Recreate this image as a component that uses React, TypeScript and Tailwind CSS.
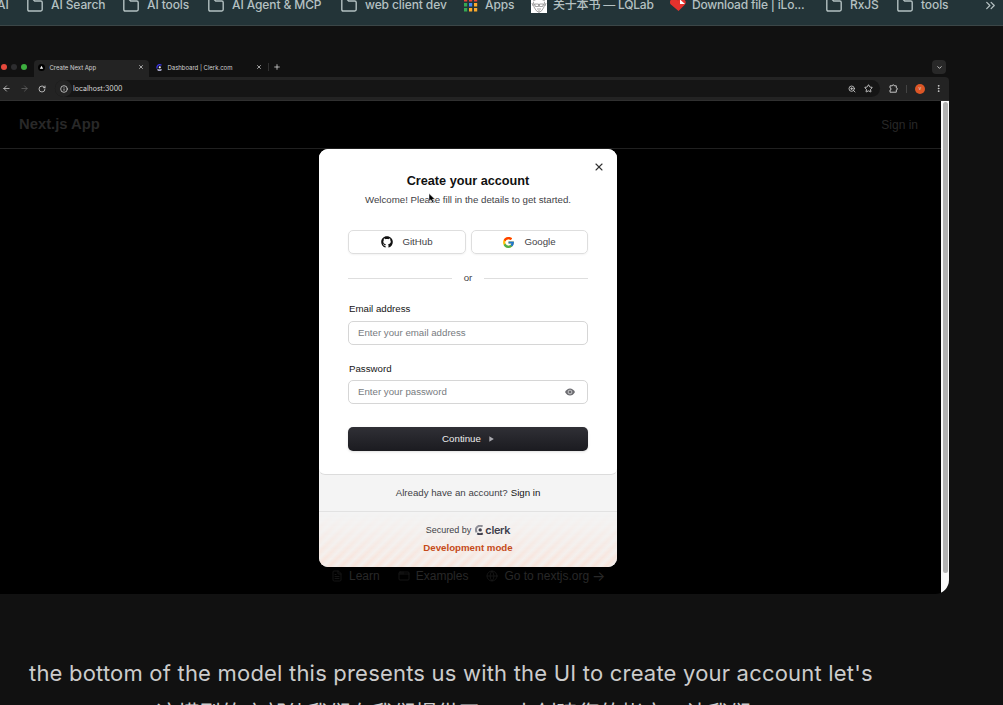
import type { ReactNode } from "react";
import {
  ArrowLeft,
  ArrowRight,
  ChevronDown,
  ChevronsRight,
  EllipsisVertical,
  FileText,
  AppWindow,
  Globe,
  Info,
  Plus,
  RotateCw,
  Star,
  X,
  ZoomIn,
} from "lucide-react";
import { FaGithub } from "react-icons/fa";
import { FcGoogle } from "react-icons/fc";

function Folder() {
  return (
    <svg width="16" height="14" viewBox="0 0 16 14" fill="none" stroke="#b3c0c1" strokeWidth="1.4" className="shrink-0">
      <path d="M.8 2.4Q.8 1 2.2 1h3.5l2 2h6.1q1.4 0 1.4 1.4v7.2q0 1.4-1.4 1.4H2.2Q.8 13 .8 11.6z" />
    </svg>
  );
}

function AppsGrid() {
  const colors = ["#ea4335", "#ea4335", "#ea4335", "#34a853", "#4285f4", "#fbaa2c", "#34a853", "#fbaa2c", "#fbaa2c"];
  return (
    <svg width="14" height="14" viewBox="0 0 14 14" className="shrink-0">
      {colors.map((c, i) => (
        <rect key={i} x={(i % 3) * 5} y={Math.floor(i / 3) * 5} width="3.2" height="3.5" fill={c} />
      ))}
    </svg>
  );
}

function FaceIcon() {
  return (
    <svg width="16" height="16" viewBox="0 0 16 16" fill="none" stroke="#666" strokeWidth=".6" className="shrink-0">
      <rect width="16" height="16" fill="#fff" stroke="none" />
      <path d="M2 4q6-4 12 0M2.500 5l.5 5q2 4.500 5 5.500 3-1 5-5.500l.5-5M3.500 7h4v2.500h-3zM8.500 7h4l-1 2.500h-3zM6 12h4M7 14h2M1 6l1 3M15 6l-1 3" />
    </svg>
  );
}

function HeartIcon() {
  return (
    <svg width="16" height="16" viewBox="0 0 16 16" className="shrink-0">
      <path d="M.3 7Q-1 3 3 1.500q3-1 5 2 2-3 6-1 3 2 1 5l-6.500 6.500z" fill="#e5322d" />
      <path d="M10 2.500l5 4.500h-5z" fill="#fff" />
    </svg>
  );
}

function PuzzleOutline() {
  return (
    <svg width="9" height="9" viewBox="0 0 9 9" fill="none" stroke="currentColor" strokeWidth=".9" className="ml-[9px] shrink-0">
      <path d="M1 1.800h2.300q0-1 1-1t1 1h2v2.100q1.100 0 1.100 1t-1.100 1v2.300H1V6q1.100 0 1.100-1T1 4z" />
    </svg>
  );
}

function Bookmark({ icon, label, className }: { icon: ReactNode; label: string; className: string }) {
  return (
    <div className={`flex shrink-0 items-center whitespace-nowrap ${className}`}>
      {icon}
      <span>{label}</span>
    </div>
  );
}

function BookmarksBar() {
  return (
    <header className="h-[26px] shrink-0 border-b border-[#3b4647] bg-[#233438]">
      <div className="flex h-[10px] items-center font-['Inter','Noto_Sans_CJK_SC',sans-serif] text-[12px] font-medium tracking-[-0.1px] text-[#b5c1c2]">
        <div className="flex w-[27px] shrink-0 justify-start">
          <span className="-ml-[3px]">AI</span>
        </div>
        <Bookmark className="w-[96px] gap-2" icon={<Folder />} label="AI Search" />
        <Bookmark className="w-[85px] gap-2" icon={<Folder />} label="AI tools" />
        <Bookmark className="w-[133px] gap-2" icon={<Folder />} label="AI Agent & MCP" />
        <Bookmark className="w-[123px] gap-2" icon={<Folder />} label="web client dev" />
        <Bookmark className="w-[67px] gap-[7px]" icon={<AppsGrid />} label="Apps" />
        <Bookmark className="w-[139px] gap-1.5 tracking-[-0.2px]" icon={<FaceIcon />} label="关于本书 — LQLab" />
        <Bookmark className="w-[156px] gap-1.5 tracking-[-0.2px]" icon={<HeartIcon />} label="Download file | iLo..." />
        <Bookmark className="w-[71px] gap-2" icon={<Folder />} label="RxJS" />
        <Bookmark className="w-[86px] gap-2" icon={<Folder />} label="tools" />
        <ChevronsRight size={15} className="shrink-0" />
      </div>
    </header>
  );
}

function TabStrip() {
  return (
    <div className="flex h-[17px] items-center text-[6px] tracking-[-0.02px] text-[#d0d0d0]">
      <div className="flex w-[34px] items-center gap-1 pb-[3px] pl-[1px]">
        <span className="size-[6px] rounded-full bg-[#e5493c]" />
        <span className="size-[6px] rounded-full bg-[#2d2d2f]" />
        <span className="size-[6px] rounded-full bg-[#3dae3f]" />
      </div>
      <div className="flex h-full w-[115px] items-center rounded-t-[4px] bg-[#232323] pb-[3px] pl-1">
        <svg width="7" height="7" viewBox="0 0 7 7">
          <circle cx="3.500" cy="3.500" r="3.500" fill="#000" />
          <path d="M3.500 1.800l1.700 3H1.800z" fill="#fff" />
        </svg>
        <span className="ml-[4.500px] flex-1">Create Next App</span>
        <X size={6} strokeWidth={3} className="mr-[5px]" />
      </div>
      <div className="flex h-full w-[119px] items-center pb-[3px] pl-[7px]">
        <svg width="7" height="7" viewBox="0 0 7 7" fill="none" strokeWidth="1.300">
          <path d="M5.500 1.300Q3.500 0 2 1.300T1.200 4.500" stroke="#3b35e8" />
          <path d="M1.500 5.400q2 1.500 4 0" stroke="#d5d5ff" />
          <circle cx="3.800" cy="3.300" r="1.100" fill="#eee" />
        </svg>
        <span className="ml-[4.500px] flex-1">Dashboard | Clerk.com</span>
        <X size={6} strokeWidth={3} className="mr-[6px]" />
      </div>
      <span className="mb-[3px] h-2 w-px bg-[#303030]" />
      <Plus size={8} strokeWidth={2.5} className="mb-[3px] ml-[4px]" />
      <div className="mr-[3px] mb-[3px] ml-auto flex size-[14px] items-center justify-center rounded-[4px] bg-[#282828]">
        <ChevronDown size={7} strokeWidth={3} />
      </div>
    </div>
  );
}

function Toolbar() {
  return (
    <div className="flex h-[24px] items-center rounded-tr-[4px] border-b border-[#303030] bg-[#232323] text-[#d5d5d5]">
      <ArrowLeft size={9} className="ml-[2px]" />
      <ArrowRight size={9} className="ml-[9px] text-[#666]" />
      <RotateCw size={8} strokeWidth={2.4} className="ml-[9px]" />
      <div className="ml-[9px] flex h-[17px] w-[825px] items-center rounded-full bg-[#151515]">
        <div className="flex size-[17px] items-center justify-center rounded-full bg-[#232323]">
          <Info size={8} strokeWidth={2.4} />
        </div>
        <span className="ml-[1px] flex-1 text-[7px] leading-[9px]">localhost:3000</span>
        <ZoomIn size={8} strokeWidth={2.4} />
        <Star size={9} strokeWidth={2.4} className="mr-[7px] ml-2" />
      </div>
      <PuzzleOutline />
      <span className="ml-2 h-2 w-px bg-[#444]" />
      <div className="ml-2 flex size-[10px] items-center justify-center rounded-full bg-[#dc5626] text-[5px]">v</div>
      <EllipsisVertical size={9} strokeWidth={2.6} className="mr-[6px] ml-auto" />
    </div>
  );
}

function ClerkLogo() {
  return (
    <svg width="9" height="10" viewBox="0 0 9 10" fill="none">
      <path d="M7.600 1.500Q4.800-.2 2.400 1.700T1.600 7.400" stroke="#8d8d96" strokeWidth="2" />
      <path d="M2.200 8.400q2.800 1.600 5.600 0" stroke="#3f3f4d" strokeWidth="2" />
      <circle cx="5.200" cy="4.900" r="1.700" fill="#3f3f4d" />
    </svg>
  );
}

function Cursor() {
  return (
    <svg width="8" height="11" viewBox="0 0 8 11" className="absolute top-[44px] left-[109px]">
      <path d="M1 .5v7.800l2-1.600 1.300 3 1.500-.7-1.300-2.700H7z" fill="#000" stroke="#fff" strokeWidth=".5" />
    </svg>
  );
}

function SignUpModal() {
  return (
    <div className="relative flex h-[418px] w-[298px] flex-col overflow-hidden rounded-[9px] bg-[#f4f4f4] text-[9.700px] leading-[12px] text-[#3f3f46]">
      <div className="relative h-[326px] rounded-b-[6px] border-b border-[#dcdcdc] bg-white px-[29px]">
        <X size={12} strokeWidth={2.2} className="absolute top-3 right-[12px] text-[#333]" />
        <h1 className="pt-[24px] text-center text-[12.700px] leading-[17px] font-bold text-[#111]">Create your account</h1>
        <p className="mt-1 text-center">Welcome! Please fill in the details to get started.</p>
        <div className="mt-6 flex gap-[5px]">
          <button className="flex h-[24px] w-[118px] shrink-0 items-center justify-center gap-[9px] rounded-[5px] border border-[#dedede] shadow-xs">
            <FaGithub size={12} color="#111" />
            GitHub
          </button>
          <button className="flex h-[24px] w-[117px] shrink-0 items-center justify-center gap-[9px] rounded-[5px] border border-[#dedede] pr-[1px] shadow-xs">
            <FcGoogle size={13} />
            Google
          </button>
        </div>
        <div className="mt-[18px] flex items-center gap-3">
          <span className="h-px flex-1 bg-[#dedede]" />
          or
          <span className="h-px flex-1 bg-[#dedede]" />
        </div>
        <label className="mt-[19px] block pl-[1px] text-[#151515]">Email address</label>
        <div className="mt-[6px] flex h-[24px] items-center rounded-[5px] border border-[#d6d6d6] px-[9px] text-[#777b80]">
          Enter your email address
        </div>
        <label className="mt-[18px] block pl-[1px] text-[#151515]">Password</label>
        <div className="mt-[5px] flex h-[24px] items-center justify-between rounded-[5px] border border-[#d6d6d6] px-[9px] text-[#777b80]">
          Enter your password
          <svg width="10" height="8" viewBox="0 0 10 8" className="mr-[3px]">
            <path d="M0 4Q2 .5 5 .5T10 4Q8 7.500 5 7.500T0 4z" fill="#6b6b70" />
            <circle cx="5" cy="4" r="1.900" fill="none" stroke="#fff" strokeWidth=".6" />
          </svg>
        </div>
        <button className="mt-[23px] flex h-[24px] w-full items-center justify-center gap-2 rounded-[5px] bg-linear-to-b from-[#303036] to-[#1b1b20] text-[#ededed] shadow-sm">
          Continue
          <svg width="5" height="6" viewBox="0 0 5 6">
            <path d="M.3.3v5.400L4.800 3z" fill="#aaaab0" />
          </svg>
        </button>
        <Cursor />
      </div>
      <div className="flex h-[37px] items-center justify-center gap-[3px] border-b border-[#e2e2e2]">
        Already have an account? <span className="text-[#151515]">Sign in</span>
      </div>
      <div className="relative flex-1">
        <div className="absolute inset-0 bg-[repeating-linear-gradient(-45deg,#f8e3da_0px,#f4efec_4px,#f8e3da_8.5px)] mask-[linear-gradient(to_bottom,transparent,black)]" />
        <div className="relative flex flex-col items-center pt-[12px]">
          <div className="flex items-center">
            <span className="text-[9px]">Secured by</span>
            <span className="ml-1 flex items-center gap-[1px] font-['Inter',sans-serif] text-[11px] font-semibold tracking-[-0.35px] text-[#3f3f4d]">
              <ClerkLogo />
              clerk
            </span>
          </div>
          <span className="mt-[6px] font-bold text-[#c54b19]">Development mode</span>
        </div>
      </div>
    </div>
  );
}

function WebPage() {
  return (
    <div className="relative flex h-[493px] overflow-hidden rounded-br-[14px] bg-black font-['Liberation_Sans',sans-serif]">
      <div className="flex flex-1 flex-col text-[#282828]">
        <nav className="flex h-[48px] items-center justify-between border-b border-[#202020] pr-[23px] pl-[19px]">
          <span className="text-[14.800px] font-bold">Next.js App</span>
          <span className="text-[12px]">Sign in</span>
        </nav>
        <footer className="mt-auto mb-[11px] flex items-center pl-[331px] text-[12px] leading-[14px]">
          <FileText size={12} strokeWidth={1.6} className="mr-[6px] text-[#1a1a1a]" />
          Learn
          <AppWindow size={12} strokeWidth={1.6} className="mr-[6px] ml-[18px] text-[#1a1a1a]" />
          Examples
          <Globe size={12} strokeWidth={1.6} className="mr-[6px] ml-[18px] text-[#1a1a1a]" />
          Go to nextjs.org <span className="ml-[3px] font-['Inter',sans-serif] text-[14px]">→</span>
        </footer>
      </div>
      <div className="w-2 bg-[#fafafa] pt-px pl-[2px]">
        <div className="h-[471px] w-[5px] rounded-full bg-[#b2b2b2]" />
      </div>
      <div className="absolute top-12 left-[319px]">
        <SignUpModal />
      </div>
    </div>
  );
}

export default function App() {
  return (
    <div className="flex h-[705px] w-[1003px] flex-col overflow-hidden bg-[#111111]">
      <BookmarksBar />
      <main className="mt-[34px] w-[949px] font-['Inter',sans-serif]">
        <TabStrip />
        <Toolbar />
        <WebPage />
      </main>
      <section className="mt-[64px] font-['Inter','Noto_Sans_CJK_SC',sans-serif] text-[22px] whitespace-nowrap text-[#cccccc]">
        <p className="pl-[29px] leading-[30px] tracking-[0.2px]">
          the bottom of the model this presents us with the UI to create your account let's
        </p>
        <p className="mt-[9px] pl-[156px] leading-[32px] tracking-[-0.4px]">这模型的底部使我们在我们提供了 UI 来创建您的帐户。让我们</p>
      </section>
    </div>
  );
}
